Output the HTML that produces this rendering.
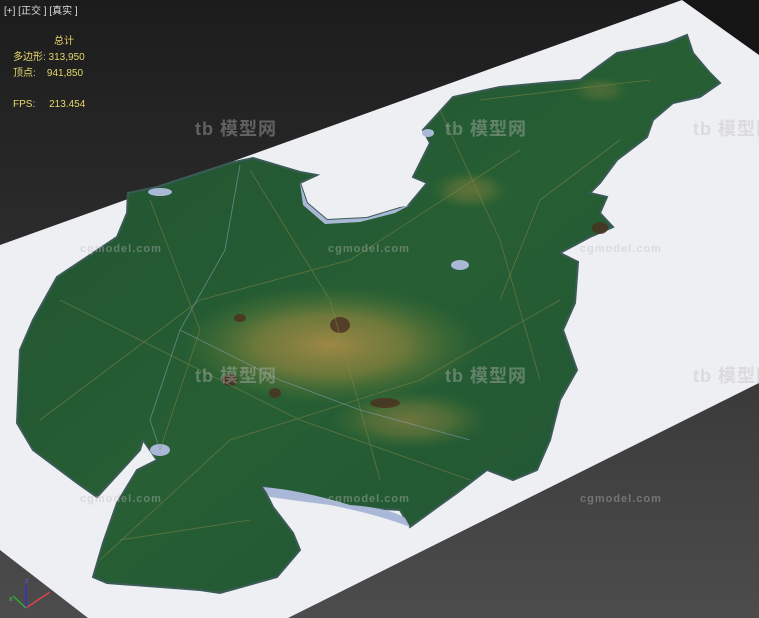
<!DOCTYPE html>
<html><head><meta charset="utf-8"><style>
html,body{margin:0;padding:0}
body{width:759px;height:618px;overflow:hidden;position:relative;background:linear-gradient(180deg,#1c1c1c 0%,#2c2c2c 40%,#3e3e3e 70%,#4c4c4c 100%);font-family:"Liberation Sans","Noto Sans CJK SC",sans-serif}
svg{position:absolute;left:0;top:0}
.t{position:absolute;font-size:10px;color:#e8d76a;white-space:pre;line-height:16px}
.w{position:absolute;color:rgba(190,190,190,0.4);font-size:11px;font-weight:bold;letter-spacing:1px;white-space:nowrap}
</style></head><body>
<svg width="759" height="618" viewBox="0 0 759 618">
<defs>
<radialGradient id="br" cx="0.5" cy="0.5" r="0.5">
<stop offset="0" stop-color="#a48a45" stop-opacity="0.95"/>
<stop offset="0.5" stop-color="#8a843e" stop-opacity="0.7"/>
<stop offset="1" stop-color="#4d7a35" stop-opacity="0"/>
</radialGradient>
<linearGradient id="gr" x1="0" y1="0" x2="1" y2="1">
<stop offset="0" stop-color="#1f5232"/><stop offset="0.5" stop-color="#275e33"/><stop offset="1" stop-color="#1f5334"/>
</linearGradient>
</defs>
<polygon points="682,0 759,0 759,55" fill="#151515"/>
<polygon points="0,245 682,0 759,55 759,383 288,618 88,618 0,550" fill="#eeeff2"/>
<polygon points="128,193 157,187 230,163 253,158 300,172 317,175 300,183 307,203 327,220 367,218 400,208 407,207 427,183 413,177 430,143 423,130 453,97 500,87 543,83 580,80 617,53 633,50 667,43 687,35 693,53 710,73 720,83 700,97 673,103 653,120 647,137 617,160 600,183 590,193 607,197 600,213 613,227 590,237 560,253 578,262 575,303 563,330 577,370 560,400 550,440 537,470 513,480 487,470 457,493 447,500 410,527 400,510 350,507 300,493 263,487 273,507 293,533 300,550 277,577 220,593 200,590 107,583 93,577 103,543 117,503 137,470 157,460 143,440 140,450 97,497 77,483 33,450 17,423 20,350 33,320 57,277 117,237 127,213" fill="url(#gr)" stroke="#3b5a58" stroke-width="2"/>
<ellipse cx="330" cy="345" rx="150" ry="60" fill="url(#br)"/>
<ellipse cx="410" cy="420" rx="80" ry="30" fill="url(#br)" opacity="0.6"/>
<ellipse cx="470" cy="190" rx="40" ry="20" fill="url(#br)" opacity="0.5"/>
<ellipse cx="600" cy="90" rx="30" ry="14" fill="url(#br)" opacity="0.35"/>
<g fill="#4a3020" opacity="0.8">
<ellipse cx="230" cy="380" rx="8" ry="6"/><ellipse cx="275" cy="393" rx="6" ry="5"/><ellipse cx="385" cy="403" rx="15" ry="5"/><ellipse cx="340" cy="325" rx="10" ry="8"/><ellipse cx="600" cy="228" rx="8" ry="6"/><ellipse cx="240" cy="318" rx="6" ry="4"/>
</g>
<g fill="#aab8d8">
<path d="M263,487 Q300,490 350,505 Q390,508 405,518 L410,527 Q380,515 330,505 Q290,500 270,497Z"/>
<ellipse cx="160" cy="450" rx="10" ry="6"/><ellipse cx="460" cy="265" rx="9" ry="5"/>
<path d="M300,183 L307,203 L327,220 L367,218 L400,208 L410,205 L395,213 L360,222 L325,224 L303,205Z"/>
<ellipse cx="160" cy="192" rx="12" ry="4"/><ellipse cx="428" cy="133" rx="6" ry="4"/>
</g>
<g stroke="#8f8a4a" stroke-width="0.8" fill="none" opacity="0.55">
<path d="M40,420 L200,300 L350,260 L520,150"/><path d="M100,560 L230,440 L420,380 L560,300"/><path d="M150,200 L200,330 L160,450"/><path d="M60,300 L300,420 L470,480"/><path d="M250,170 L330,300 L380,480"/><path d="M440,110 L500,240 L540,380"/><path d="M480,100 L650,80"/><path d="M120,540 L250,520"/><path d="M500,300 L540,200 L620,140"/>
</g>
<g stroke="#8aa0b0" stroke-width="0.9" fill="none" opacity="0.6">
<path d="M240,165 L225,250 L180,330 L150,420 L160,450"/><path d="M180,330 L280,380 L360,410 L470,440"/>
</g>
<g stroke="#d44" stroke-width="1.5"><line x1="26" y1="608" x2="50" y2="592"/></g>
<g stroke="#33c" stroke-width="1.5"><line x1="26" y1="608" x2="26" y2="585"/></g>
<g stroke="#3a3" stroke-width="1.5"><line x1="26" y1="608" x2="13" y2="596"/></g>
<text x="25" y="583" font-size="7" fill="#55f" font-family="Liberation Sans">z</text>
<text x="9" y="601" font-size="7" fill="#4c4" font-family="Liberation Sans">x</text>
</svg>
<div class="t" style="left:4px;top:4px;color:#ddd">[+] [正交 ] [真实 ]</div>
<div class="t" style="left:54px;top:34px">总计</div>
<div class="t" style="left:13px;top:50px">多边形: 313,950</div>
<div class="t" style="left:13px;top:66px">顶点:    941,850</div>
<div class="t" style="left:13px;top:97px">FPS:     213.454</div>
<div class="w" style="left:80px;top:243px">cgmodel.com</div>
<div class="w" style="left:328px;top:243px">cgmodel.com</div>
<div class="w" style="left:580px;top:243px">cgmodel.com</div>
<div class="w" style="left:80px;top:493px">cgmodel.com</div>
<div class="w" style="left:328px;top:493px">cgmodel.com</div>
<div class="w" style="left:580px;top:493px">cgmodel.com</div>
<div class="w" style="left:195px;top:115px;font-size:18px">tb 模型网</div>
<div class="w" style="left:445px;top:115px;font-size:18px">tb 模型网</div>
<div class="w" style="left:693px;top:115px;font-size:18px">tb 模型网</div>
<div class="w" style="left:195px;top:362px;font-size:18px">tb 模型网</div>
<div class="w" style="left:445px;top:362px;font-size:18px">tb 模型网</div>
<div class="w" style="left:693px;top:362px;font-size:18px">tb 模型网</div>
</body></html>
